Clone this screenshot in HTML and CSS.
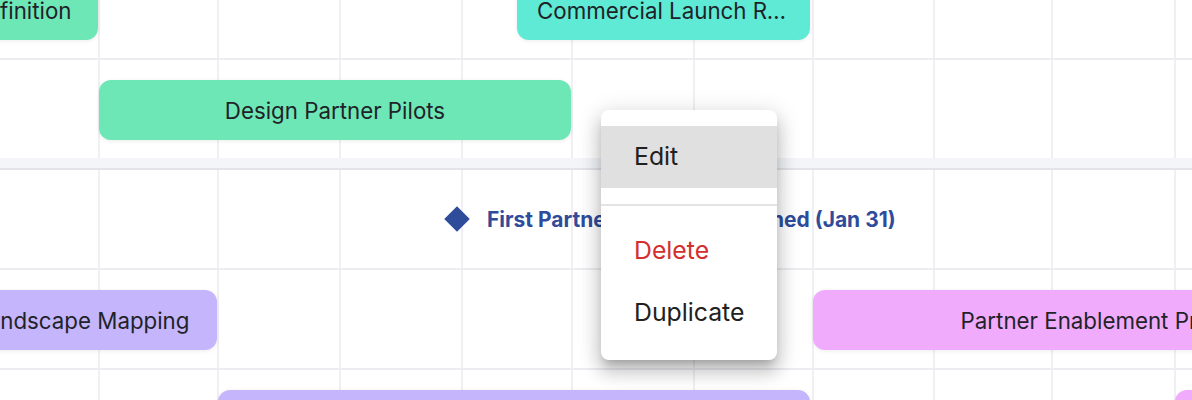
FILE: index.html
```html
<!DOCTYPE html>
<html lang="en">
<head>
<meta charset="utf-8">
<title>Roadmap timeline</title>
<link rel="stylesheet" href="styles.css">
</head>
<body>
<div class="timeline">
  <div class="grid-lines">
    <div class="vline" style="left:98px"></div>
    <div class="vline" style="left:217px"></div>
    <div class="vline" style="left:339px"></div>
    <div class="vline" style="left:461px"></div>
    <div class="vline" style="left:571px"></div>
    <div class="vline" style="left:693px"></div>
    <div class="vline" style="left:812px"></div>
    <div class="vline" style="left:933px"></div>
    <div class="vline" style="left:1051px"></div>
    <div class="vline" style="left:1174px"></div>
  </div>

  <section class="lane-group">
    <div class="row">
      <div class="bar green" style="left:-149px;width:247px"><span class="bar-label">Problem Definition</span></div>
      <div class="bar teal" style="left:517px;width:293px"><span class="bar-label">Commercial Launch Readiness</span></div>
    </div>
    <div class="row">
      <div class="bar green" style="left:99px;width:472px"><span class="bar-label">Design Partner Pilots</span></div>
    </div>
  </section>

  <div class="group-divider"></div>

  <section class="lane-group">
    <div class="row milestone-row">
      <div class="milestone" style="left:444px">
        <span class="diamond"></span>
        <span class="milestone-label">First Partner Agreement Signed (Jan 31)</span>
      </div>
    </div>
    <div class="row bordered">
      <div class="bar violet" style="left:-185px;width:402px"><span class="bar-label">Competitive Landscape Mapping</span></div>
      <div class="bar pink" style="left:813px;width:599px"><span class="bar-label">Partner Enablement Program</span></div>
    </div>
    <div class="row bordered">
      <div class="bar violet" style="left:218px;width:592px"><span class="bar-label">Channel Strategy</span></div>
      <div class="bar pink" style="left:1175px;width:300px"><span class="bar-label">Partner Portal</span></div>
    </div>
  </section>

  <ul class="context-menu" role="menu">
    <li class="menu-item active" role="menuitem">Edit</li>
    <li class="menu-divider" role="separator"></li>
    <li class="menu-item danger" role="menuitem">Delete</li>
    <li class="menu-item" role="menuitem">Duplicate</li>
  </ul>
</div>
</body>
</html>
```

FILE: styles.css
```css
html, body {
  margin: 0;
  padding: 0;
  background: #ffffff;
}

body {
  width: 1192px;
  height: 400px;
  overflow: hidden;
  font-family: Inter, "Noto Sans", "Liberation Sans", sans-serif;
  color: #212121;
}

.timeline {
  position: relative;
  margin-top: -42px;
}

.grid-lines {
  position: absolute;
  inset: 0;
  pointer-events: none;
}

.vline {
  position: absolute;
  top: 0;
  bottom: 0;
  width: 2px;
  background: #f0f0f4;
}

.lane-group {
  position: relative;
}

.row {
  position: relative;
  height: 100px;
  box-sizing: border-box;
  border-top: 2px solid #ececf1;
}

.row.milestone-row {
  height: 98px;
  border-top: none;
}

.group-divider {
  position: relative;
  height: 10px;
  background: #f4f5f9;
  border-bottom: 2px solid #e3e4ea;
}

.bar {
  position: absolute;
  top: 20px;
  height: 60px;
  box-sizing: border-box;
  border-radius: 12px;
  padding: 0 20px;
  display: flex;
  align-items: center;
  justify-content: center;
  box-shadow: 0 1px 4px rgba(0, 0, 0, 0.08);
  font-size: 22.3px;
  color: #1f2328;
}

.bar-label {
  display: block;
  white-space: nowrap;
  overflow: hidden;
  text-overflow: ellipsis;
  min-width: 0;
}

.bar.green { background: #6ee7b7; }
.bar.teal { background: #5eead4; }
.bar.violet { background: #c4b5fd; }
.bar.pink { background: #f0abfc; }

.milestone {
  position: absolute;
  top: 0;
  bottom: 0;
  display: flex;
  align-items: center;
  gap: 17px;
  color: #2f4c9b;
}

.diamond {
  width: 18px;
  height: 18px;
  margin: 0 4px;
  background: #2f4c9b;
  transform: rotate(45deg);
}

.milestone-label {
  font-weight: 700;
  font-size: 21px;
  white-space: nowrap;
}

.context-menu {
  position: absolute;
  left: 601px;
  top: 152px;
  width: 176px;
  margin: 0;
  padding: 16px 0;
  list-style: none;
  background: #ffffff;
  border-radius: 8px;
  box-shadow: 0 7px 8px -4px rgba(0, 0, 0, 0.2),
              0 12px 17px 2px rgba(0, 0, 0, 0.14),
              0 5px 22px 4px rgba(0, 0, 0, 0.12);
  z-index: 10;
}

.menu-item {
  height: 62px;
  box-sizing: border-box;
  display: flex;
  align-items: center;
  padding-left: 33px;
  padding-bottom: 2px;
  font-size: 24.8px;
  color: #212121;
}

.menu-item.active {
  background: #e0e0e0;
}

.menu-item.danger {
  color: #d32f2f;
}

.menu-divider {
  height: 2px;
  margin: 16px 0 14px;
  background: #e4e4e4;
}
```
